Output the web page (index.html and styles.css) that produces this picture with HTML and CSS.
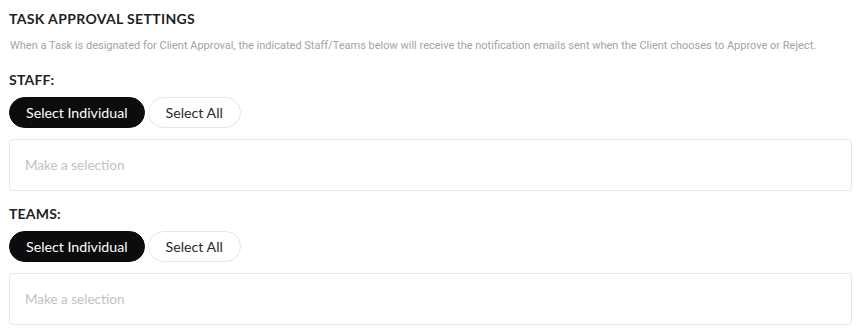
FILE: index.html
```html
<!DOCTYPE html>
<html>
<head>
<meta charset="utf-8">
<link rel="stylesheet" href="styles.css">
</head>
<body>
<div class="settings">
  <h2 class="title">TASK APPROVAL SETTINGS</h2>
  <p class="desc">When a Task is designated for Client Approval, the indicated Staff/Teams below will receive the notification emails sent when the Client chooses to Approve or Reject.</p>

  <section class="group">
    <h3 class="label">STAFF:</h3>
    <div class="toggle">
      <button class="pill active">Select Individual</button>
      <button class="pill pill-wide">Select All</button>
    </div>
    <div class="selectbox">Make a selection</div>
  </section>

  <section class="group">
    <h3 class="label">TEAMS:</h3>
    <div class="toggle">
      <button class="pill active">Select Individual</button>
      <button class="pill pill-wide">Select All</button>
    </div>
    <div class="selectbox">Make a selection</div>
  </section>
</div>
</body>
</html>
```
FILE: styles.css
```css
* { box-sizing: border-box; }
html, body { margin: 0; background: #fff; }
body { font-family: "Lato", "Noto Sans", sans-serif; color: #222; }
.settings { padding: 9px 10px 0 9px; display: flex; flex-direction: column; }
.title { margin: 0; font-size: 14px; font-weight: 700; line-height: 20px; color: #1f1f24; letter-spacing: 0.35px; }
.desc { margin: 10px 0 0 1px; font-family: "Roboto", sans-serif; font-size: 11px; line-height: 14px; color: #a3a3a3; }
.group { display: flex; flex-direction: column; }
.label { margin: 18px 0 0; font-size: 14px; font-weight: 700; line-height: 18px; color: #1f1f24; letter-spacing: 0.2px; }
.toggle { display: flex; gap: 3px; margin-top: 8px; }
.pill { font-family: inherit; font-size: 14.2px; height: 31px; border-radius: 16px; padding: 0 16px; background: #fff; color: #2a2a2a; border: 1px solid #e6e6e6; cursor: pointer; }
.pill-wide { padding: 0 17px; }
.pill.active { background: #0c0c0c; color: #fff; border-color: #0c0c0c; }
.selectbox { margin-top: 11px; height: 52px; border: 1px solid #e3e6ea; border-radius: 4px; padding: 0 15px; display: flex; align-items: center; font-size: 13.5px; color: #c2c2c2; }
.group + .group .label { margin-top: 14px; }
```
